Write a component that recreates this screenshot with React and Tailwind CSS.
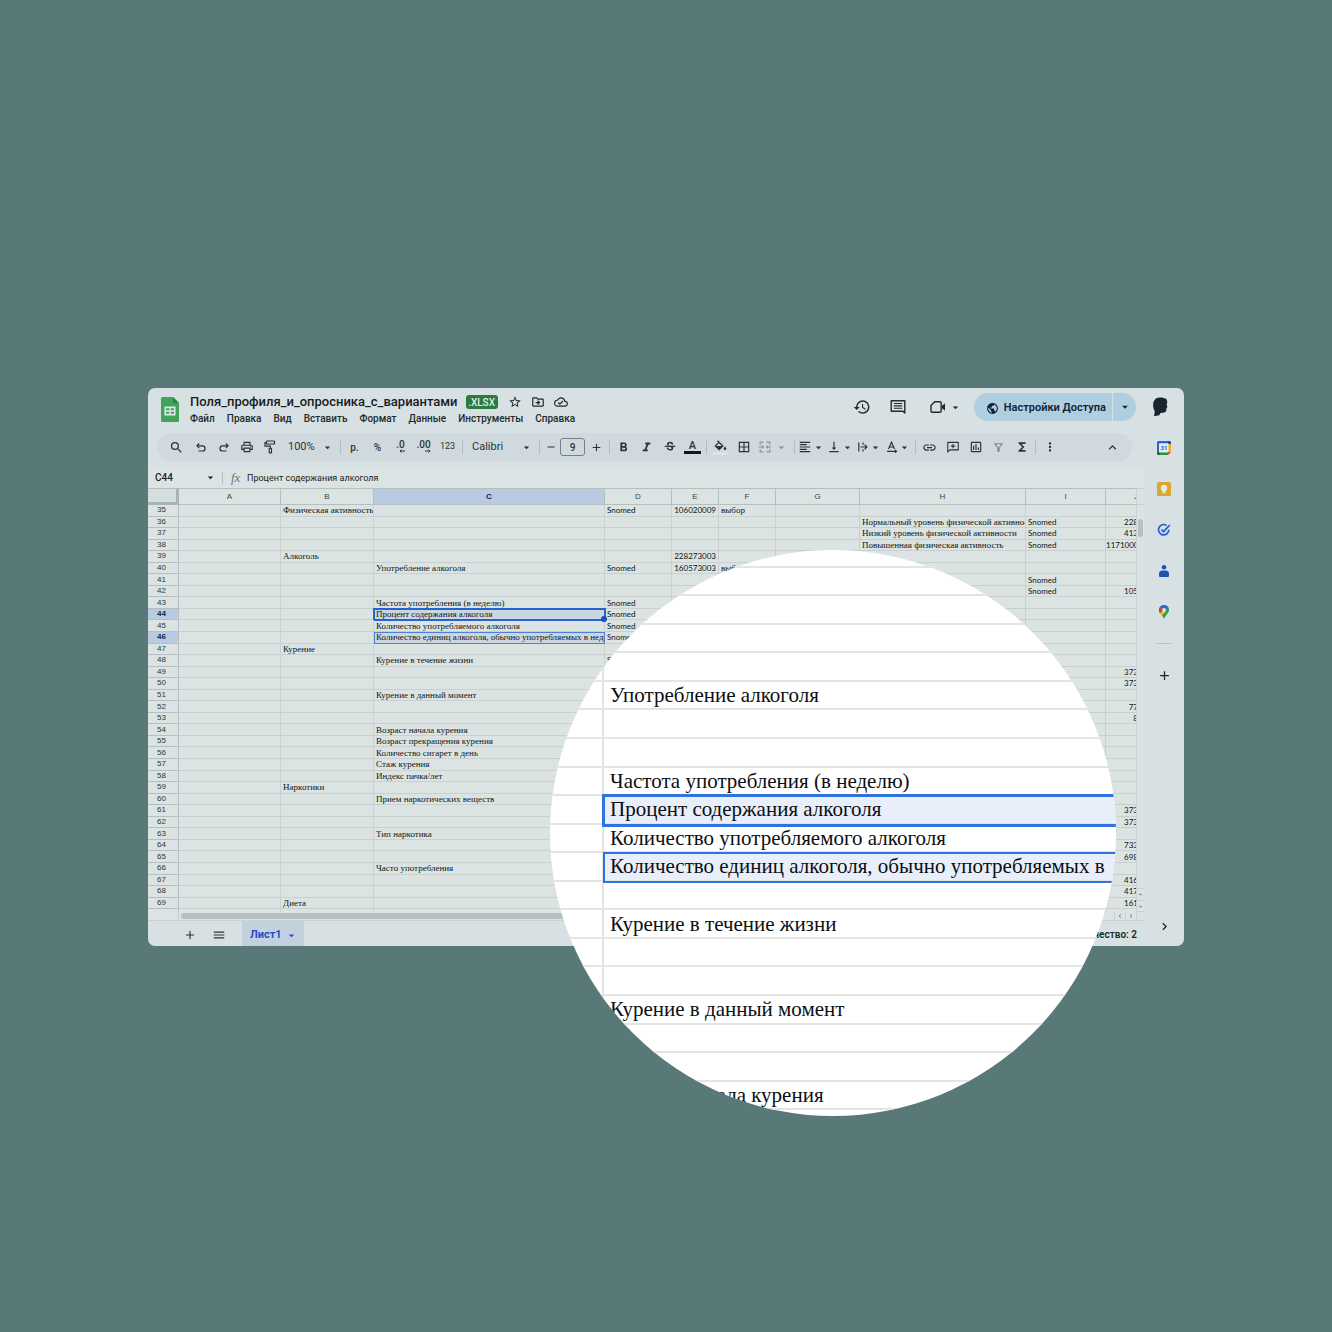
import {
  MdAdd,
  MdArrowDropDown,
  MdBorderAll,
  MdChevronRight,
  MdExpandLess,
  MdFormatAlignLeft,
  MdFormatBold,
  MdFormatItalic,
  MdFunctions,
  MdHistory,
  MdLink,
  MdMenu,
  MdMoreVert,
  MdOutlineCloudDone,
  MdOutlineDriveFileMove,
  MdOutlineFilterAlt,
  MdOutlineInsertChart,
  MdOutlinePrint,
  MdPublic,
  MdRemove,
  MdSearch,
  MdStarBorder,
  MdStrikethroughS,
  MdVerticalAlignBottom,
} from 'react-icons/md'

const MENU = ['Файл', 'Правка', 'Вид', 'Вставить', 'Формат', 'Данные', 'Инструменты', 'Справка']

const COLUMNS = [
  { id: 'A', width: 'w-[102px]' },
  { id: 'B', width: 'w-[93px]' },
  { id: 'C', width: 'w-[231px]' },
  { id: 'D', width: 'w-[67px]' },
  { id: 'E', width: 'w-[47px]' },
  { id: 'F', width: 'w-[57px]' },
  { id: 'G', width: 'w-[84px]' },
  { id: 'H', width: 'w-[166px]' },
  { id: 'I', width: 'w-[80px]' },
  { id: 'J', width: 'w-[33px]' },
]

const CELLS = {
  35: { B: 'Физическая активность', D: 'Snomed', E: '106020009', F: 'выбор' },
  36: { H: 'Нормальный уровень физической активност', I: 'Snomed', J: '228' },
  37: { H: 'Низкий уровень физической активности', I: 'Snomed', J: '413' },
  38: { H: 'Повышенная физическая активность', I: 'Snomed', J: '1171000' },
  39: { B: 'Алкоголь', E: '228273003' },
  40: { C: 'Употребление алкоголя', D: 'Snomed', E: '160573003', F: 'выбор' },
  41: { I: 'Snomed' },
  42: { I: 'Snomed', J: '105' },
  43: { C: 'Частота употребления (в неделю)', D: 'Snomed' },
  44: { C: 'Процент содержания алкоголя', D: 'Snomed' },
  45: { C: 'Количество употребляемого алкоголя', D: 'Snomed' },
  46: { C: 'Количество единиц алкоголя, обычно употребляемых в неделю', D: 'Snomed' },
  47: { B: 'Курение' },
  48: { C: 'Курение в течение жизни', D: 'Snomed' },
  49: { J: '373' },
  50: { J: '373' },
  51: { C: 'Курение в данный момент' },
  52: { J: '77' },
  53: { J: '8' },
  54: { C: 'Возраст начала курения' },
  55: { C: 'Возраст прекращения курения' },
  56: { C: 'Количество сигарет в день' },
  57: { C: 'Стаж курения' },
  58: { C: 'Индекс пачка/лет' },
  59: { B: 'Наркотики' },
  60: { C: 'Прием наркотических веществ' },
  61: { J: '373' },
  62: { J: '373' },
  63: { C: 'Тип наркотика' },
  64: { J: '733' },
  65: { J: '698' },
  66: { C: 'Часто употребления' },
  67: { J: '416' },
  68: { J: '417' },
  69: { B: 'Диета', J: '161' },
}

const ROWS = Array.from({ length: 36 }, (_, i) => 35 + i)
const SELECTED_ROWS = [44, 46]
const LENS_ROWS = Array.from({ length: 21 }, (_, i) => 35 + i)

function ToolButton({ label, children, className = 'w-[23px]' }) {
  return (
    <button type="button" aria-label={label} className={`flex h-5 shrink-0 items-center justify-center ${className}`}>
      {children}
    </button>
  )
}

function DropButton({ label, children, className = 'w-[29px]' }) {
  return (
    <button type="button" aria-label={label} className={`flex h-5 shrink-0 items-center justify-center ${className}`}>
      {children}
      <MdArrowDropDown size={13} />
    </button>
  )
}

function Divider() {
  return <span className="mx-0.5 h-3.5 w-px shrink-0 bg-[#b3bec3]" />
}

function ToolSelect({ label, value, className }) {
  return (
    <span className={`relative flex h-5 shrink-0 items-center ${className}`}>
      <select aria-label={label} className="w-full appearance-none pl-[7px] text-[11px] leading-4">
        <option>{value}</option>
      </select>
      <MdArrowDropDown size={13} className="pointer-events-none absolute right-1" />
    </span>
  )
}

function SheetsLogo() {
  return (
    <svg viewBox="0 0 18 25" className="h-[25px] w-[18px]" aria-hidden="true">
      <path d="M1.5 0H12l6 6v17.5a1.5 1.5 0 0 1-1.5 1.5h-15A1.5 1.5 0 0 1 0 23.500v-22A1.500 1.500 0 0 1 1.500 0z" fill="#44a35a" />
      <path d="M12 0l6 6h-6z" fill="#2f8546" />
      <path d="M3.500 9.500h11v9h-11z" fill="#dfe9e6" />
      <path d="M5 11.200h3.300v2H5zM9.700 11.200H13v2H9.700zM5 14.800h3.300v2H5zM9.700 14.800H13v2H9.700z" fill="#44a35a" />
    </svg>
  )
}

function UndoIcon({ className = '' }) {
  return (
    <svg
      viewBox="0 0 12 12"
      className={`size-3 ${className}`}
      fill="none"
      stroke="currentColor"
      strokeWidth="1.2"
      aria-hidden="true"
    >
      <path d="M4.200 2.500 2 4.800l2.200 2.300" />
      <path d="M2.200 4.800H7.400a2.600 2.600 0 0 1 0 5.200H3.500" />
    </svg>
  )
}

function PaintRollerIcon() {
  return (
    <svg viewBox="0 0 12 14" className="h-3.5 w-3" fill="none" stroke="currentColor" strokeWidth="1.200" aria-hidden="true">
      <rect x="2.500" y="1" width="8" height="3" rx=".6" />
      <path d="M2.500 2.500H1v3.700h5.300v2" />
      <rect x="5.200" y="8.300" width="2.300" height="4.600" rx=".5" />
    </svg>
  )
}

function DecimalIcon({ text, right }) {
  return (
    <span className="flex flex-col items-end text-[10px] leading-[8px] font-medium">
      <span>{text}</span>
      <svg viewBox="0 0 6 4" className="h-1 w-1.5" fill="none" stroke="currentColor" aria-hidden="true">
        {right ? <path d="M0 2h5M3.500 .5 5 2 3.500 3.500" /> : <path d="M6 2H1M2.500 .5 1 2l1.500 1.500" />}
      </svg>
    </span>
  )
}

function FillIcon() {
  return (
    <svg viewBox="0 0 16 15" className="h-[15px] w-4" aria-hidden="true">
      <path d="M4.500.800 9.800 6 6.200 9.600 2.400 5.900 6.100 2.300" fill="none" stroke="currentColor" strokeWidth="1.300" />
      <path d="M2.700 6h7L6.200 9.500z" fill="currentColor" />
      <path d="M12 6.500c.9 1.100 1.300 1.700 1.300 2.200a1.300 1.300 0 0 1-2.600 0c0-.5.400-1.100 1.300-2.200z" fill="currentColor" />
      <path d="M0 12.500h16v2H0z" fill="#e0e7ea" />
    </svg>
  )
}

function MergeIcon() {
  return (
    <svg viewBox="0 0 12 12" className="size-3" fill="none" stroke="currentColor" strokeWidth="1.200" aria-hidden="true">
      <path d="M4.500 1.200H1.200v2.600M7.500 1.200h3.300v2.600M4.500 10.800H1.200V8.200M7.500 10.800h3.300V8.200" />
      <path d="M0 6h4M3 4.600 4.400 6 3 7.400M12 6H8M9 4.600 7.600 6 9 7.400" />
    </svg>
  )
}

function WrapIcon() {
  return (
    <svg viewBox="0 0 12 12" className="size-3" fill="none" stroke="currentColor" strokeWidth="1.200" aria-hidden="true">
      <path d="M1.800 1.500v9M6 1.500v2.300M6 8.200v2.300M3.500 6h6.300M7.600 3.600 10 6 7.600 8.400" />
    </svg>
  )
}

function RotateIcon() {
  return (
    <svg viewBox="0 0 12 12" className="size-3" fill="none" stroke="currentColor" strokeWidth="1.200" aria-hidden="true">
      <path d="M2.500 8 5.500 1.200 8.500 8M3.400 6h4.200M1 10.300h9.500M9 8.800l1.500 1.500L9 11.800" />
    </svg>
  )
}

function CommentIcon({ className, plus }) {
  return (
    <svg viewBox="0 0 16 16" className={className} fill="none" stroke="currentColor" strokeWidth="1.400" aria-hidden="true">
      {plus ? (
        <path d="M1 14.500V1.800h14v10H3.800zM8 4v5.500M5.200 6.800h5.600" />
      ) : (
        <>
          <path d="M14.800 14V1.800H1.200v10.400H13z" strokeLinejoin="round" />
          <path d="M3.800 4.500h8.400M3.800 6.900h8.400M3.800 9.300h8.400" strokeWidth="1.100" />
        </>
      )}
    </svg>
  )
}

function CameraIcon() {
  return (
    <svg viewBox="0 0 16 14" className="h-3.5 w-4" fill="none" stroke="currentColor" strokeWidth="1.400" aria-hidden="true">
      <path d="M4.800 1.800H10a1.200 1.200 0 0 1 1.200 1.200v8a1.200 1.200 0 0 1-1.200 1.200H2.200A1.200 1.200 0 0 1 1 11V5.600z" />
      <path d="M12 5.800 15 3.300v7.400L12 8.200z" fill="currentColor" stroke="none" />
    </svg>
  )
}

function Avatar() {
  return (
    <svg viewBox="0 0 16 20" className="h-5 w-4" fill="#182430" aria-hidden="true">
      <path d="M1.500 5C2.500 2 5 .6 8 .6c2.500 0 5 .6 6.800 1.900l.5 3-.7 1.800.9 2.700-1 1-.3 3.300-1.900 1.300-3.800.3-1.200 2.300-5.300 1 .800-4.900C1.200 12 .6 8.500 1.500 5z" />
    </svg>
  )
}

function CalendarIcon() {
  return (
    <svg viewBox="0 0 14 14" className="size-3.5" aria-hidden="true">
      <path d="M1.500 0H11v2.500H2.500v8.500H0V1.500A1.500 1.500 0 0 1 1.500 0z" fill="#2563d8" />
      <path d="M11 0h1.500A1.500 1.500 0 0 1 14 1.500V3h-3z" fill="#1a49a8" />
      <path d="M11 3h3v8h-3z" fill="#e8b32a" />
      <path d="M3 11h8v3H3z" fill="#2c9147" />
      <path d="M0 11h3v3H1.500A1.500 1.500 0 0 1 0 12.500z" fill="#1b6b33" />
      <path d="M11 11h3l-3 3z" fill="#d8352a" />
      <path d="M2 2.500h9.500v9H2z" fill="#e4ebef" />
      <text x="7" y="9.200" textAnchor="middle" fontSize="6" fontWeight="700" fill="#2563d8">
        31
      </text>
    </svg>
  )
}

function KeepIcon() {
  return (
    <svg viewBox="0 0 14 14" className="size-3.5" aria-hidden="true">
      <rect width="14" height="14" rx="1.500" fill="#d9a92f" />
      <circle cx="7" cy="6" r="3.200" fill="#e6e9e2" />
      <path d="M5.500 8h3v3.200h-3z" fill="#e6e9e2" />
    </svg>
  )
}

function TasksIcon() {
  return (
    <svg viewBox="0 0 14 14" className="size-3.5" fill="none" stroke="#1f63dd" strokeWidth="1.700" aria-hidden="true">
      <path d="M9.600 2.400A5.200 5.200 0 1 0 11.900 6.800" />
      <path d="M4.300 6.500 6.500 8.700 12.800 2" />
    </svg>
  )
}

function ContactsIcon() {
  return (
    <svg viewBox="0 0 12 14" className="h-3.5 w-3" fill="#1d51b5" aria-hidden="true">
      <circle cx="6" cy="3.200" r="2.200" />
      <path d="M4.500 6.500h3A3.500 3.500 0 0 1 11 10v2a1 1 0 0 1-1 1H2a1 1 0 0 1-1-1v-2a3.500 3.500 0 0 1 3.500-3.500z" />
    </svg>
  )
}

function MapsIcon() {
  return (
    <svg viewBox="1 1 10 14" className="h-3.5 w-2.5" aria-hidden="true">
      <path d="M6 1a5 5 0 0 1 5 5C11 9.500 7.200 11 6 15 4.800 11 1 9.500 1 6A5 5 0 0 1 6 1z" fill="#2f9a50" />
      <path d="M6 1a5 5 0 0 1 4.600 3L6 6 2.200 2.800A5 5 0 0 1 6 1z" fill="#2b6be0" />
      <path d="M2.200 2.800 6 6 1.900 9A5 5 0 0 1 2.200 2.800z" fill="#d5402f" />
      <path d="M1.900 9 6 6l1.800 1.800L4.400 11.600z" fill="#e9b72e" />
      <circle cx="6" cy="6" r="1.900" fill="#dde6e8" />
    </svg>
  )
}

function Header() {
  return (
    <header className="flex items-start pt-[5px] pr-4 pl-[13px]">
      <div className="pt-1">
        <SheetsLogo />
      </div>
      <div className="pl-[11px]">
        <div className="flex h-[18px] items-center">
          <h1 className="text-[13px] leading-[18px] font-medium whitespace-nowrap text-[#17201f]">
            Поля_профиля_и_опросника_с_вариантами
          </h1>
          <span className="ml-2 flex h-3.5 w-8 items-center justify-center rounded-[3px] bg-[#2b7a40] pt-0.5 text-[10px] leading-3 font-medium text-[#dfeee4]">
            .XLSX
          </span>
          <div className="ml-[10px] flex gap-[9px]">
            <button type="button" aria-label="Пометить">
              <MdStarBorder size={14} />
            </button>
            <button type="button" aria-label="Переместить">
              <MdOutlineDriveFileMove size={14} />
            </button>
            <button type="button" aria-label="Статус документа">
              <MdOutlineCloudDone size={14} />
            </button>
          </div>
        </div>
        <nav className="flex gap-3 text-[10px] leading-4 font-medium">
          {MENU.map((item) => (
            <button type="button" key={item}>
              {item}
            </button>
          ))}
        </nav>
      </div>
      <div className="ml-auto flex h-7 items-center">
        <button type="button" aria-label="История версий">
          <MdHistory size={18} />
        </button>
        <button type="button" aria-label="Комментарии" className="ml-[19px]">
          <CommentIcon className="size-4" />
        </button>
        <button type="button" aria-label="Видеовстреча" className="ml-6 flex items-center gap-[3px]">
          <CameraIcon />
          <MdArrowDropDown size={13} />
        </button>
        <div className="ml-3 flex h-7 overflow-hidden rounded-full bg-[#afcfe1] text-[#0d2436]">
          <button type="button" className="flex items-center gap-[5px] pt-0.5 pr-1.5 pl-3 text-[11px] font-semibold">
            <MdPublic size={13} />
            Настройки Доступа
          </button>
          <button
            type="button"
            aria-label="Быстрые действия"
            className="flex w-6 items-center justify-center border-l border-[#d7e0e3]"
          >
            <MdArrowDropDown size={14} />
          </button>
        </div>
        <button type="button" aria-label="Аккаунт" className="ml-4">
          <Avatar />
        </button>
      </div>
    </header>
  )
}

function Toolbar() {
  return (
    <div className="mt-[6px] mr-3 ml-[9px] flex h-7 items-center rounded-full bg-[#cfd9de] pr-2 pl-[7px] text-[#2b3435]">
      <ToolButton label="Поиск" className="w-[25px]">
        <MdSearch size={15} />
      </ToolButton>
      <ToolButton label="Отменить">
        <UndoIcon />
      </ToolButton>
      <ToolButton label="Повторить">
        <UndoIcon className="-scale-x-100" />
      </ToolButton>
      <ToolButton label="Печать">
        <MdOutlinePrint size={14} />
      </ToolButton>
      <ToolButton label="Копировать форматирование">
        <PaintRollerIcon />
      </ToolButton>
      <ToolSelect label="Масштаб" value="100%" className="w-[57px]" />
      <Divider />
      <ToolButton label="Денежный формат">
        <span className="text-[10px] font-medium">р.</span>
      </ToolButton>
      <ToolButton label="Процентный формат">
        <span className="text-[10px] font-medium">%</span>
      </ToolButton>
      <ToolButton label="Уменьшить число знаков">
        <DecimalIcon text=".0" />
      </ToolButton>
      <ToolButton label="Увеличить число знаков">
        <DecimalIcon text=".00" right />
      </ToolButton>
      <ToolButton label="Другие форматы" className="w-[25px]">
        <span className="text-[9px]">123</span>
      </ToolButton>
      <Divider />
      <ToolSelect label="Шрифт" value="Calibri" className="w-[72px]" />
      <Divider />
      <ToolButton label="Уменьшить размер" className="w-[18px]">
        <MdRemove size={12} />
      </ToolButton>
      <input
        aria-label="Размер шрифта"
        defaultValue="9"
        className="h-[18px] w-[25px] shrink-0 rounded-[3px] border border-[#77807f] text-center text-[10px] font-medium"
      />
      <ToolButton label="Увеличить размер" className="w-[22px]">
        <MdAdd size={13} />
      </ToolButton>
      <Divider />
      <ToolButton label="Полужирный">
        <MdFormatBold size={15} />
      </ToolButton>
      <ToolButton label="Курсив">
        <MdFormatItalic size={15} />
      </ToolButton>
      <ToolButton label="Зачеркнутый">
        <MdStrikethroughS size={14} />
      </ToolButton>
      <ToolButton label="Цвет текста">
        <span className="w-[17px] border-b-[3px] border-[#111817] text-center text-[11px] leading-[11px] font-medium">
          A
        </span>
      </ToolButton>
      <Divider />
      <ToolButton label="Цвет заливки">
        <FillIcon />
      </ToolButton>
      <ToolButton label="Границы">
        <MdBorderAll size={14} />
      </ToolButton>
      <DropButton label="Объединить ячейки" className="w-[37px] gap-1 text-[#8b9598]">
        <MergeIcon />
      </DropButton>
      <Divider />
      <DropButton label="Горизонтальное выравнивание">
        <MdFormatAlignLeft size={14} />
      </DropButton>
      <DropButton label="Вертикальное выравнивание">
        <MdVerticalAlignBottom size={14} />
      </DropButton>
      <DropButton label="Перенос текста">
        <WrapIcon />
      </DropButton>
      <DropButton label="Поворот текста">
        <RotateIcon />
      </DropButton>
      <Divider />
      <ToolButton label="Вставить ссылку">
        <MdLink size={15} />
      </ToolButton>
      <ToolButton label="Вставить комментарий">
        <CommentIcon className="size-3" plus />
      </ToolButton>
      <ToolButton label="Вставить диаграмму">
        <MdOutlineInsertChart size={14} />
      </ToolButton>
      <ToolButton label="Создать фильтр">
        <MdOutlineFilterAlt size={13} className="text-[#7c8688]" />
      </ToolButton>
      <ToolButton label="Функции">
        <MdFunctions size={14} />
      </ToolButton>
      <Divider />
      <ToolButton label="Ещё">
        <MdMoreVert size={14} />
      </ToolButton>
      <ToolButton label="Скрыть меню" className="ml-auto w-[23px]">
        <MdExpandLess size={15} />
      </ToolButton>
    </div>
  )
}

function FormulaBar() {
  return (
    <div className="flex h-[21px] items-center bg-[#dbe4e2] text-[#1c2524]">
      <input
        aria-label="Поле имени"
        defaultValue="C44"
        className="ml-[7px] h-4 w-[49px] text-[10px] font-medium"
      />
      <MdArrowDropDown size={13} />
      <span className="ml-[5px] h-3 w-px bg-[#b5c0c0]" />
      <label htmlFor="formula" className="w-6 pl-2 font-['Liberation_Serif',serif] text-[13px] leading-4 text-[#6a7474] italic">
        fx
      </label>
      <input
        id="formula"
        defaultValue="Процент содержания алкоголя"
        className="h-4 flex-1 text-[9px]"
      />
    </div>
  )
}

function Cell({ row, col }) {
  const value = CELLS[row]?.[col.id]
  const selected = col.id === 'C' && SELECTED_ROWS.includes(row)
  const active = selected && row === 44
  const numeric = col.id === 'E' || col.id === 'J'
  const code = numeric || value === 'Snomed'
  return (
    <td
      className={`relative border-r border-b border-[#c8d1d0] p-0 ${selected ? 'bg-[#cad6e2]' : ''} ${
        active ? 'outline-2 -outline-offset-1 outline-[#2464cb]' : ''
      } ${selected && !active ? 'outline-1 -outline-offset-1 outline-[#4a80d6]' : ''}`}
    >
      <div
        className={`h-[10px] overflow-hidden leading-[10px] whitespace-nowrap ${
          code ? "font-['Lato',sans-serif] text-[8px]" : "font-['Liberation_Serif',serif] text-[9px]"
        } ${col.id === 'J' ? 'text-right' : numeric ? 'pr-0.5 text-right' : 'pl-0.5'}`}
      >
        {value}
      </div>
      {active && <span className="absolute -right-[3px] -bottom-[3px] z-10 size-1.5 rounded-full bg-[#1b50bb]" />}
    </td>
  )
}

function Grid() {
  return (
    <div className="flex">
      <div className="flex min-w-0 flex-1 flex-col">
        <div className="h-[424px] overflow-hidden">
          <table className="h-[433px] w-[991px] table-fixed border-separate border-spacing-0 text-[#101615]">
            <colgroup>
              <col className="w-[31px]" />
              {COLUMNS.map((col) => (
                <col key={col.id} className={col.width} />
              ))}
            </colgroup>
            <thead>
              <tr className="h-[17px] font-['Liberation_Sans',sans-serif] text-[8px] leading-[14px] text-[#3c4645]">
                <th
                  aria-label="Выделить всё"
                  className="h-[17px] border-t border-r-[3px] border-b-[3px] border-t-[#b4bfbf] border-r-[#a9b4b4] border-b-[#a9b4b4] bg-[#d5dedf] p-0"
                />
                {COLUMNS.map((col) => (
                  <th
                    key={col.id}
                    scope="col"
                    className={`h-[17px] overflow-hidden border-t border-r border-b border-[#b4bfbf] p-0 ${
                      col.id === 'C' ? 'bg-[#b8cbe1] font-bold text-[#12284a]' : 'font-normal'
                    } ${col.id === 'J' ? 'text-right' : 'text-center'}`}
                  >
                    {col.id}
                  </th>
                ))}
              </tr>
            </thead>
            <tbody>
              {ROWS.map((row) => (
                <tr key={row}>
                  <th
                    scope="row"
                    className={`border-r border-b border-[#b4bfbf] p-0 pr-[3px] text-center font-['Liberation_Sans',sans-serif] text-[8px] leading-[10px] ${
                      SELECTED_ROWS.includes(row)
                        ? 'bg-[#b8cbe1] font-bold text-[#12284a]'
                        : 'font-normal text-[#2c3635]'
                    }`}
                  >
                    {row}
                  </th>
                  {COLUMNS.map((col) => (
                    <Cell key={col.id} row={row} col={col} />
                  ))}
                </tr>
              ))}
            </tbody>
          </table>
        </div>
        <div className="flex h-[9px] border-b border-[#c8d1d0]">
          <div className="w-[31px] border-r border-[#c8d1d0]" />
          <div className="min-w-0 flex-1 px-0.5 py-px">
            <div className="h-1.5 w-4/5 rounded-full bg-[#b7c1c4]" />
          </div>
          <div className="flex w-[11px] items-center justify-center border-l border-[#c8d1d0] text-[#6c7675]">
            <MdChevronRight size={8} className="rotate-180" />
          </div>
          <div className="flex w-[11px] items-center justify-center border-l border-[#c8d1d0] text-[#6c7675]">
            <MdChevronRight size={8} />
          </div>
        </div>
      </div>
      <div className="flex w-2 flex-col items-center border-b border-l border-[#c8d1d0] text-[#6c7675]">
        <div className="h-[17px] w-full border-y border-[#c8d1d0]" />
        <div className="mt-3.5 h-[18px] w-[5px] rounded-full bg-[#b7c1c4]" />
        <div className="mt-auto flex h-3 w-full items-center justify-center border-t border-[#c8d1d0]">
          <MdExpandLess size={7} />
        </div>
        <div className="mb-2 flex h-3 w-full items-center justify-center border-y border-[#c8d1d0]">
          <MdExpandLess size={7} className="rotate-180" />
        </div>
      </div>
    </div>
  )
}

function TabsBar() {
  return (
    <footer className="flex h-[25px] items-center text-[#2b3435]">
      <button type="button" aria-label="Добавить лист" className="ml-[35px] pt-0.5">
        <MdAdd size={14} />
      </button>
      <button type="button" aria-label="Все листы" className="ml-[15px] pt-0.5">
        <MdMenu size={14} />
      </button>
      <button
        type="button"
        className="ml-4 flex h-full items-center gap-[3px] bg-[#c3d0e0] pt-1 pr-1.5 pl-2 text-[11px] font-bold text-[#1c4fbf]"
      >
        Лист1
        <MdArrowDropDown size={13} />
      </button>
      <span className="ml-auto pt-0.5 pr-[7px] text-[10px] font-semibold text-[#143024]">Количество: 2</span>
    </footer>
  )
}

function SidePanel() {
  return (
    <aside className="flex w-10 shrink-0 flex-col items-center pt-[14px] text-[#1c2524]">
      <div className="flex flex-col items-center gap-[27px]">
        <button type="button" aria-label="Календарь">
          <CalendarIcon />
        </button>
        <button type="button" aria-label="Keep">
          <KeepIcon />
        </button>
        <button type="button" aria-label="Задачи">
          <TasksIcon />
        </button>
        <button type="button" aria-label="Контакты">
          <ContactsIcon />
        </button>
        <button type="button" aria-label="Карты">
          <MapsIcon />
        </button>
      </div>
      <hr className="mt-6 w-3.5 border-[#b9c4c7]" />
      <button type="button" aria-label="Дополнения" className="mt-6">
        <MdAdd size={15} />
      </button>
      <button type="button" aria-label="Скрыть панель" className="mt-auto mb-3">
        <MdChevronRight size={15} />
      </button>
    </aside>
  )
}

// Round magnifier over columns B and C
function Lens() {
  return (
    <div className="absolute top-[162px] left-[402px] size-[566px] overflow-hidden rounded-full bg-white">
      <table className="-mt-[11px] h-[600px] w-[576px] table-fixed border-separate border-spacing-0 font-['Liberation_Serif',serif] text-[21px] leading-[26px] text-[#0c0f12]">
        <colgroup>
          <col className="w-[54px]" />
          <col />
        </colgroup>
        <tbody>
          {LENS_ROWS.map((row) => (
            <tr key={row}>
              <td className="border-r-2 border-b-2 border-[#e4e4e4] p-0" />
              <td
                className={`border-b-2 border-[#e4e4e4] p-0 ${SELECTED_ROWS.includes(row) ? 'bg-[#e8eefa]' : ''} ${
                  row === 44 ? 'outline-[3px] -outline-offset-1 outline-[#2f73e0]' : ''
                } ${row === 46 ? 'outline-2 -outline-offset-1 outline-[#2f73e0]' : ''}`}
              >
                <div className="mr-4 h-[26px] overflow-hidden pl-1.5 whitespace-nowrap">{CELLS[row]?.C}</div>
              </td>
            </tr>
          ))}
        </tbody>
      </table>
    </div>
  )
}

export default function App() {
  return (
    <main className="flex min-h-screen items-center bg-[#587977] px-37 pt-0.5">
      <div className="relative w-full">
        <div className="overflow-hidden rounded-[7px] bg-[#d7e0e3] font-['Roboto',sans-serif] text-[#222b2b]">
          <Header />
          <div className="flex">
            <div className="flex min-w-0 flex-1 flex-col">
              <Toolbar />
              <div className="mt-[6px] bg-[#dbe4e2]">
                <FormulaBar />
                <Grid />
              </div>
              <TabsBar />
            </div>
            <SidePanel />
          </div>
        </div>
        <Lens />
      </div>
    </main>
  )
}
